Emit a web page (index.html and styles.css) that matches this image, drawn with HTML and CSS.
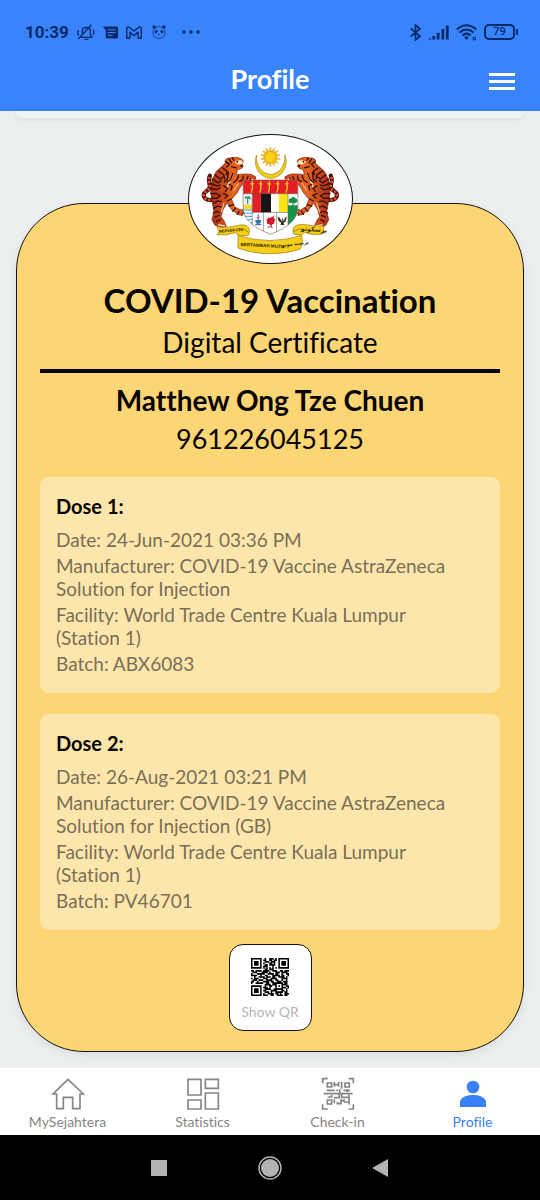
FILE: index.html
```html
<!DOCTYPE html>
<html lang="en">
<head>
<meta charset="utf-8">
<meta name="viewport" content="width=device-width, initial-scale=1">
<title>Profile</title>
<link rel="stylesheet" href="styles.css">
</head>
<body>
<header class="top">
  <div class="status">
    <div class="status-left">
      <span class="clock">10:39</span>
      <svg class="s-mute" viewBox="0 0 54 51" fill="none" stroke="currentColor" stroke-width="4"><path d="M13 40h32l-5-8V21c0-14-24-14-24 0v11l-5 8M22 46h12M4 45L43 3M5 18c-4 5-3 12 0 17M48 17c4 5 3 11 0 16"/></svg>
      <svg class="s-msg" viewBox="0 0 45 38"><path fill="currentColor" d="M0 1h41q4 0 4 4v28q0 4-4 4H12q-4 0-4-4V12z"/><path d="M14 11h24M14 19h24M14 27h15" stroke="#3983fd" stroke-width="3"/></svg>
      <svg class="s-mail" viewBox="0 0 45 36" fill="none" stroke="currentColor" stroke-width="4" stroke-linejoin="round"><path d="M2 34V5q3-5 8-1l12 10L35 4q5-4 8 1v29h-9V17L22 27 11 17v17z"/></svg>
      <svg class="s-panda" viewBox="0 0 40 40"><path d="M8 8q12-8 24 0 7 8 5 18-3 12-17 12T3 26Q1 16 8 8z" fill="none" stroke="currentColor" stroke-width="2"/><g fill="currentColor"><circle cx="6" cy="6" r="5"/><circle cx="34" cy="6" r="5"/><ellipse cx="12" cy="19" rx="4" ry="5" transform="rotate(30 12 19)"/><ellipse cx="28" cy="19" rx="4" ry="5" transform="rotate(-30 28 19)"/><path d="M17 26h6l-3 4z"/></g></svg>
      <svg class="s-dots" viewBox="0 0 54 12" fill="currentColor"><circle cx="6" cy="6" r="5"/><circle cx="27" cy="6" r="5"/><circle cx="48" cy="6" r="5"/></svg>
    </div>
    <div class="status-right">
      <svg class="s-bt" viewBox="0 0 32 50" fill="none" stroke="currentColor" stroke-width="5"><path d="M2 13l27 23-13 11V3l13 11L2 37"/></svg>
      <svg class="s-signal" viewBox="0 0 62 44" fill="currentColor"><path d="M0 43l9-6v6zM13 32h8v11h-8zM26 23h8v20h-8zM40 12h8v31h-8zM53 1h8v42h-8z"/></svg>
      <svg class="s-wifi" viewBox="0 0 62 50" fill="none" stroke="currentColor" stroke-width="6"><path d="M2 16q29-25 58 0M10 25q21-18 42 0M19 34q12-11 24 0"/><path d="M24 39q7-6 14 0l-7 8z" fill="currentColor" stroke="none"/><circle cx="54" cy="43" r="4" stroke-width="3"/></svg>
      <span class="battery">79</span>
    </div>
  </div>
  <div class="bar">
    <h1 class="bar-title">Profile</h1>
    <button class="menu" aria-label="Menu"><span class="menu-line"></span><span class="menu-line"></span><span class="menu-line"></span></button>
  </div>
</header>

<main class="content">
  <div class="previous-card"></div>
  <article class="certificate">
    <div class="emblem">
      <svg class="crest" viewBox="24 29 495 390" role="img" aria-label="Coat of arms of Malaysia">
        <defs>
          <linearGradient id="fur" x1="0" x2="1"><stop offset="0" stop-color="#ab2c18"/><stop offset=".5" stop-color="#e4661f"/><stop offset="1" stop-color="#d8431c"/></linearGradient>
          <clipPath id="shield"><path d="M188 166h167v82c0 45-44 68-83 83-40-15-84-38-84-83z"/></clipPath>
          <g id="tiger">
            <path d="M100 224c-14 8-33 0-32-13 2-13 20-12 19-26-1-10-7-19 0-32" fill="none" stroke="#49150f" stroke-width="13" stroke-linecap="round"/>
            <path d="M100 224c-14 8-33 0-32-13 2-13 20-12 19-26-1-10-7-19 0-32" fill="none" stroke="#d94b2b" stroke-width="9" stroke-dasharray="7 5"/>
            <path d="M125 214l3 58h31l-10-28 30 25" fill="#fff" stroke="#a9a9a9" stroke-width="1"/>
            <path d="M133 107q3-9 15-8 20-6 36 3l5 7-4 9 3 7-5 6-12 4-4 14 25-1q20-3 35 9l-3 12-15-2-18 6-14 19-7 13-17 20 10 23 16 9 20-2 7 7-8 10-21 1-22-14-16-23-13 22-5 20 9 12 7 17-12 5-23-8-9-17 6-25-5-27-5-32 4-36 13-27 19-17 10-10z" fill="url(#fur)" stroke="#7a2410" stroke-width="2"/>
            <path d="M163 111l18-5 6 6-5 7-11-2zM158 151l-14 20-6 27M175 174l-15 25M130 235l-9 30" fill="#ffe6bd" stroke="#ffd49a" stroke-width="3"/>
            <g fill="none" stroke="#321009" stroke-width="4" stroke-linecap="round">
              <path d="M134 110l12 8-8 9M145 102l8 12M155 99l5 7M153 125l14 4M125 129l14 10-2 11M113 139l16 11 3 13M102 150l16 13 9-6M94 163l18 12 9-7M92 177l16 7 11-2M90 192l17 4 10-6M90 208l16-1 12 7M93 221l16 1 10-9M97 237l14-7 11 2M99 252l11-6 11 2M97 266l11-4 9 3M103 279l12-5M106 293l12-6M143 142l-3 22-9 8M157 146l-7 19-10 8M174 153l-5 13-10 8M188 154l-1 12-11 5M203 155l-5 12M213 160l-5 9M129 184l12 8-7 9M145 179l10 6-4 12M128 207l13 6-8 8M140 230l12-6M145 246l13-5M157 261l8-9M170 271l6-9M184 273l5-7"/>
            </g>
            <circle cx="170" cy="111" r="2.500"/><path d="M179 119l9 3-6 5z"/><path d="M112 303l20 3M213 162l9 7M187 272l9-4" stroke="#fff3e4" stroke-width="4"/>
          </g>
          <path id="ray" d="M-5-14L0-31 5-14z"/>
        </defs>
        <use href="#tiger"/><use href="#tiger" transform="matrix(-1 0 0 1 542 0)"/>
        <path d="M229 90C216 125 240 160 272 161c34-1 57-38 43-71 3 35-19 59-43 59s-46-24-43-59z" fill="#f6ce15" stroke="#9e8114" stroke-width="2"/>
        <g transform="translate(271 96)" fill="#f5bf17" stroke="#c98f12" stroke-width="1">
          <use href="#ray"/><use href="#ray" transform="rotate(26)"/><use href="#ray" transform="rotate(51)"/><use href="#ray" transform="rotate(77)"/><use href="#ray" transform="rotate(103)"/><use href="#ray" transform="rotate(129)"/><use href="#ray" transform="rotate(154)"/><use href="#ray" transform="rotate(180)"/><use href="#ray" transform="rotate(206)"/><use href="#ray" transform="rotate(231)"/><use href="#ray" transform="rotate(257)"/><use href="#ray" transform="rotate(283)"/><use href="#ray" transform="rotate(309)"/><use href="#ray" transform="rotate(334)"/>
          <circle r="17" fill="#fbcf1c"/>
        </g>
        <g clip-path="url(#shield)">
          <path fill="#fff" d="M185 160h175v175H185z"/>
          <path fill="#e51d24" d="M185 165h175v43H185zM216 208h26v56h-26z"/>
          <path fill="#171316" d="M242 208h31v56h-31z"/><path fill="#fff" d="M273 208h24v56h-24z"/><path fill="#f9e31a" d="M297 208h28v56h-28z"/>
          <path fill="#e4f3f7" d="M187 208h29v33h-29z"/><path fill="#f4d53d" d="M187 241h29v14h-29z"/><path d="M187 258h29M187 267h29M187 277h29M187 287h29M187 297h29" stroke="#5cb4dc" stroke-width="4"/>
          <path d="M202 239v-20M194 224q4-10 8-5 5-7 8 4M194 217l16 7" stroke="#287351" stroke-width="3" fill="none"/>
          <path d="M325 243h31v62h-31z" fill="#179349"/><path d="M340 244v-23" stroke="#6b5b23" stroke-width="4"/><path d="M327 231q-1-9 8-9 6-9 12 0 9 1 6 11l-8 5-7-3-8 3z" fill="#12934b"/>
          <path d="M185 208h172M216 208v100M325 208v100M216 265h110M250 265v60M290 265v60" stroke="#4d4541" stroke-width="1.500"/>
          <path d="M225 288h18q0 12-9 12t-9-12z" fill="#2878b6"/><path d="M234 270v18M225 302h18" stroke="#355c9f" stroke-width="3"/><path d="M229 281h10" stroke="#d54f36" stroke-width="3"/>
          <path d="M271 282q9-8 12 2 6 1 0 8 2 9-6 9-4 6-9 0-10 1-7-9-6-5 2-7-1-7 8-3z" fill="#d71930"/><path d="M270 298l7 15M275 284l8-9M272 307l-9 4" stroke="#a12b32" stroke-width="3"/>
          <path d="M293 277l7 5 5 9 3-10 4 10 4-10 5-4-3 15-7 5 3 6h-12l2-7-8-5z" fill="#302b24"/><path d="M305 290h7" stroke="#e1b72c" stroke-width="3"/>
        </g>
        <path d="M188 166h167v82c0 45-44 68-83 83-40-15-84-38-84-83z" fill="none" stroke="#806b68" stroke-width="2"/>
        <g fill="none" stroke="#f8cf27" stroke-width="4" stroke-linecap="round"><path d="M216 171v23l-3 9M242 171v23l-3 9M268 171v23l-3 9M294 171v23l-3 9M322 171v23l-3 9"/><path d="M210 178h10M236 178h10M262 178h10M288 178h10M316 178h10" stroke-width="3"/></g>
        <g fill="#f5ce19" stroke="#9b7914" stroke-width="2">
          <path d="M173 335l-8-9q-26 11-57 7l7-10-7-14q34 4 67-5 21-5 31 9 4 10-2 22h-20v13z"/>
          <path d="M366 335l8-9q26 9 48 6l17-6-7-7 4-12q-38-1-61-5-21-3-33 8-5 12 1 22h18v13z"/>
          <path d="M173 335q96 31 192 0l5 17-8 25q-43 14-89 14-55 0-101-18z"/>
        </g>
        <path d="M176 324q-1-11 14-8l14 9M370 324q-1-12-15-8l-14 8" fill="none" stroke="#a98210" stroke-width="3"/>
        <g class="motto"><text x="115" y="327" font-size="12" transform="rotate(-5 115 327)">BERSEKUTU</text><text x="180" y="367" font-size="14" transform="rotate(3 180 367)">BERTAMBAH MUTU</text><text x="364" y="320" font-size="19" transform="rotate(4 364 320)">برسکوتو</text><text x="306" y="370" font-size="15" transform="rotate(-7 306 370)">برتمبه موتو</text></g>
      </svg>
    </div>
    <h2 class="cert-title">COVID-19 Vaccination</h2>
    <p class="cert-subtitle">Digital Certificate</p>
    <hr class="rule">
    <h3 class="holder">Matthew Ong Tze Chuen</h3>
    <p class="holder-id">961226045125</p>
    <section class="dose">
      <h4 class="dose-title">Dose 1:</h4>
      <p class="dose-line">Date: 24-Jun-2021 03:36 PM</p>
      <p class="dose-line">Manufacturer: COVID-19 Vaccine AstraZeneca<br>Solution for Injection</p>
      <p class="dose-line">Facility: World Trade Centre Kuala Lumpur<br>(Station 1)</p>
      <p class="dose-line">Batch: ABX6083</p>
    </section>
    <section class="dose">
      <h4 class="dose-title">Dose 2:</h4>
      <p class="dose-line">Date: 26-Aug-2021 03:21 PM</p>
      <p class="dose-line">Manufacturer: COVID-19 Vaccine AstraZeneca<br>Solution for Injection (GB)</p>
      <p class="dose-line">Facility: World Trade Centre Kuala Lumpur<br>(Station 1)</p>
      <p class="dose-line">Batch: PV46701</p>
    </section>
    <button class="qr-button">
      <svg class="qr" viewBox="0 0 25 25"><path stroke="#000" stroke-width="1.100" d="M0 .5h7m2 0h1m2 0h3m1 0h1m1 0h7M0 1.5h1m5 0h1m1 0h2m2 0h2m1 0h2m1 0h1m5 0h1M0 2.5h1m1 0h3m1 0h1m2 0h3m1 0h3m2 0h1m1 0h3m1 0h1M0 3.5h1m1 0h3m1 0h1m1 0h1m3 0h2m1 0h1m2 0h1m1 0h3m1 0h1M0 4.5h1m1 0h3m1 0h1m2 0h2m1 0h4m2 0h1m1 0h3m1 0h1M0 5.5h1m5 0h1m1 0h3m3 0h1m3 0h1m5 0h1M0 6.5h7m1 0h1m1 0h1m1 0h1m1 0h1m1 0h1m1 0h7M9 7.5h2m1 0h3M0 8.5h2m1 0h4m1 0h4m2 0h3m2 0h2m1 0h3M1 9.5h3m3 0h4m1 0h1m3 0h3m1 0h4M0 10.5h1m3 0h5m2 0h4m1 0h2m2 0h1m2 0h2M0 11.5h4m2 0h1m2 0h2m3 0h5m1 0h2m2 0h1M2 12.5h1m2 0h4m1 0h3m1 0h2m2 0h4m1 0h1M0 13.5h1m1 0h3m3 0h3m2 0h4m3 0h4M1 14.5h3m1 0h3m2 0h4m2 0h2m2 0h1m2 0h1M0 15.5h2m2 0h1m3 0h4m1 0h2m2 0h3m1 0h3M0 16.5h1m2 0h5m2 0h2m2 0h7m1 0h2M9 17.5h4m1 0h3m3 0h4M0 18.5h7m2 0h1m2 0h2m2 0h1m1 0h1m1 0h1m2 0h2M0 19.5h1m5 0h1m1 0h3m1 0h1m3 0h1m3 0h3m1 0h1M0 20.5h1m1 0h3m1 0h1m2 0h4m2 0h6m2 0h1M0 21.5h1m1 0h3m1 0h1m1 0h2m3 0h4m3 0h2m1 0h1M0 22.5h1m1 0h3m1 0h1m2 0h3m1 0h1m2 0h5m1 0h2M0 23.5h1m5 0h1m1 0h1m2 0h4m1 0h2m1 0h1m2 0h3M0 24.5h7m1 0h3m2 0h2m2 0h4m1 0h2"/></svg>
      <span class="qr-label">Show QR</span>
    </button>
  </article>
</main>

<nav class="tabs">
  <a class="tab" href="#home">
    <svg class="tab-icon" viewBox="151 112 102 102" fill="none" stroke="currentColor" stroke-width="5"><path d="M202 119l-45 44h11v44h20v-34h28v34h22v-44h10z"/></svg>
    <span>MySejahtera</span>
  </a>
  <a class="tab" href="#statistics">
    <svg class="tab-icon" viewBox="557 112 102 102" fill="none" stroke="currentColor" stroke-width="5"><path d="M563 119h39v47h-39zM615 119h39v27h-39zM563 181h39v27h-39zM615 160h39v48h-39z"/></svg>
    <span>Statistics</span>
  </a>
  <a class="tab" href="#checkin">
    <svg class="tab-icon" viewBox="151 112 102 102" fill="none" stroke="currentColor" stroke-width="5"><path d="M156 131v-14h15M234 117h14v14M156 194v14h15M234 208h14v-14M159 162h87M170 130h13v12h-13zM223 130h13v12h-13zM170 181h13v12h-13zM191 127v14M191 135h12M204 127v14M213 127v20M168 152h24M197 152h5M207 148v13M218 152h20M230 148v10M171 172h12v-6M190 174h16v-10M213 163v10h22v-8M191 179v12M200 187v5h11v-14M211 184h9v-6M220 187h15M235 176v19"/></svg>
    <span>Check-in</span>
  </a>
  <a class="tab tab-active" href="#profile" aria-current="page">
    <svg class="tab-icon" viewBox="558 112 102 102" fill="currentColor"><circle cx="609" cy="142" r="19"/><path d="M570 202v-14c0-14 18-22 39-22s39 8 39 22v14z"/></svg>
    <span>Profile</span>
  </a>
</nav>

<div class="system">
  <button class="sys" aria-label="Recent apps"><svg class="sys-icon" viewBox="0 0 26 26"><path d="M5 5h16v16H5z" fill="#b2b2b2"/></svg></button>
  <button class="sys" aria-label="Home"><svg class="sys-icon" viewBox="0 0 26 26"><circle cx="13" cy="13" r="11" fill="none" stroke="#b2b2b2" stroke-width="1.500"/><circle cx="13" cy="13" r="9" fill="#b2b2b2"/></svg></button>
  <button class="sys" aria-label="Back"><svg class="sys-icon" viewBox="0 0 26 26"><path d="M20 4v18L4 13z" fill="#b2b2b2"/></svg></button>
</div>
</body>
</html>
```

FILE: styles.css
```css
* { box-sizing: border-box; }
body { margin: 0; min-height: 100vh; display: flex; flex-direction: column; background: #ebeff0; font-family: Lato, "Open Sans", sans-serif; font-variant-ligatures: none; color: #080500; }
h1, h2, h3, h4, p { margin: 0; }
button { font: inherit; padding: 0; border: 0; background: none; }
svg { display: block; }

.top { background: #3983fd; color: #082b68; }
.status { display: flex; justify-content: space-between; align-items: center; height: 46px; padding: 18px 25px 0 25px; }
.status-left, .status-right { display: flex; align-items: center; }
.status-left { gap: 8px; }
.status-right { gap: 7px; }
.clock { font: 700 17px/20px Roboto, sans-serif; }
.s-mute { width: 18px; height: 17px; }
.s-msg { width: 15px; height: 13px; }
.s-mail { width: 16px; height: 13px; }
.s-panda { width: 14px; height: 14px; margin-left: 2px; }
.s-dots { width: 18px; height: 4px; margin-left: 8px; }
.s-bt { width: 11px; height: 17px; }
.s-signal { width: 21px; height: 15px; }
.s-wifi { width: 21px; height: 17px; }
.battery { position: relative; width: 31px; height: 16px; border: 2px solid currentColor; border-radius: 5px; font: 500 11px/12px Roboto, sans-serif; text-align: center; }
.battery::after { content: ""; position: absolute; right: -5px; top: 3px; width: 2px; height: 6px; border-radius: 1px; background: currentColor; }
.bar { display: grid; grid-template-columns: 1fr auto 1fr; align-items: center; height: 65px; padding: 0 25px; color: #fff; }
.bar-title { grid-column: 2; font-size: 27px; line-height: 32px; font-weight: 700; }
.menu { justify-self: end; display: grid; gap: 4px; width: 26px; margin-top: 5px; }
.menu-line { height: 3px; background: #fff; }

.content { flex: 1; padding: 0 16px 16px; }
.previous-card { height: 7px; background: #f1f4f5; border-radius: 0 0 6px 6px; box-shadow: 0 1px 5px rgba(0, 0, 0, .08); }
.certificate { display: flex; flex-direction: column; align-items: center; margin-top: 85px; padding: 0 23px 20px; border: 1px solid #17130a; border-radius: 68px; background: #fcd675; box-shadow: 0 3px 10px rgba(0, 0, 0, .08); text-align: center; }
.emblem { width: 165px; height: 130px; margin-top: -70px; border: 1px solid #17130a; border-radius: 50%; background: #fff; overflow: hidden; }
.crest { width: 100%; height: 100%; }
.motto { font-family: "Liberation Sans", "DejaVu Sans", sans-serif; font-weight: 700; font-variant-ligatures: normal; fill: #35280a; }
.cert-title { margin-top: 16px; font-size: 33px; line-height: 40px; font-weight: 700; }
.cert-subtitle { margin-top: 6px; font-size: 28px; line-height: 32px; }
.rule { width: 100%; height: 4px; margin: 11px 0 11px; border: 0; background: #080500; }
.holder { font-size: 28px; line-height: 32px; font-weight: 700; }
.holder-id { margin-top: 7px; font-size: 27px; line-height: 32px; }
.dose { width: 100%; margin-top: 21px; padding: 17px 16px 18px; border-radius: 9px; background: #fde6ab; text-align: left; display: grid; gap: 3px; }
.holder-id + .dose { margin-top: 22px; }
.dose-title { margin-bottom: 7px; font-size: 20px; line-height: 24px; font-weight: 700; }
.dose-line { font-size: 19px; line-height: 23px; color: #7b6e58; }
.qr-button { display: flex; flex-direction: column; align-items: center; width: 83px; margin-top: 14px; padding: 13px 0 9px; border: 1px solid #17130a; border-radius: 14px; background: #fff; }
.qr { width: 38px; height: 38px; }
.qr-label { margin-top: 7px; font-size: 14px; line-height: 18px; color: #b5b5b5; }

.tabs { display: grid; grid-template-columns: repeat(4, 1fr); padding: 9px 0 4px; background: #fff; }
.tab { display: flex; flex-direction: column; align-items: center; gap: 2px; color: #858585; font-size: 14px; line-height: 18px; text-decoration: none; }
.tab-icon { width: 34px; height: 34px; }
.tab-active { color: #3880f5; }

.system { display: flex; justify-content: center; align-items: center; gap: 85px; height: 65px; background: #000; }
.sys-icon { width: 26px; height: 26px; }
```
